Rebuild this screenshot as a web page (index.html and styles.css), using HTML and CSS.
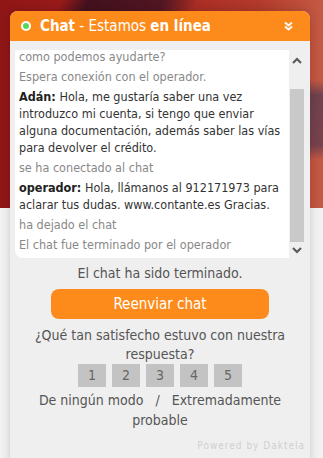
FILE: index.html
```html
<!DOCTYPE html>
<html lang="es">
<head>
<meta charset="utf-8">
<title>Chat</title>
<link rel="stylesheet" href="styles.css">
</head>
<body>
<div class="widget">
  <div class="header">
    <span class="dot"></span>
    <span class="title"><b>Chat</b> - Estamos <b>en línea</b></span>
    <svg class="collapse" width="9" height="10" viewBox="0 0 9 10"><path d="M1 1.5 L4.5 4.5 L8 1.5 M1 5.5 L4.5 8.5 L8 5.5" fill="none" stroke="#fff" stroke-width="1.8"/></svg>
  </div>
  <div class="body">
    <div class="log-row">
      <div class="log">
        <div class="log-inner">
          <div class="msg sys">como podemos ayudarte?</div>
          <div class="msg sys">Espera conexión con el operador.</div>
          <div class="msg"><b>Adán:</b> Hola, me gustaría saber una vez introduzco mi cuenta, si tengo que enviar alguna documentación, además saber las vías para devolver el crédito.</div>
          <div class="msg sys">se ha conectado al chat</div>
          <div class="msg"><b>operador:</b> Hola, llámanos al 912171973 para aclarar tus dudas. www.contante.es Gracias.</div>
          <div class="msg sys">ha dejado el chat</div>
          <div class="msg sys">El chat fue terminado por el operador</div>
        </div>
      </div>
      <div class="scroll">
        <svg class="arrow up" width="10" height="7" viewBox="0 0 10 7"><path d="M1 6 L5 2 L9 6" fill="none" stroke="#5a5a5a" stroke-width="2.2"/></svg>
        <div class="thumb"></div>
        <svg class="arrow down" width="10" height="7" viewBox="0 0 10 7"><path d="M1 1 L5 5 L9 1" fill="none" stroke="#5a5a5a" stroke-width="2.2"/></svg>
      </div>
    </div>
    <p class="ended">El chat ha sido terminado.</p>
    <button class="resend">Reenviar chat</button>
    <p class="question">¿Qué tan satisfecho estuvo con nuestra respuesta?</p>
    <div class="rating">
      <span class="rate">1</span>
      <span class="rate">2</span>
      <span class="rate">3</span>
      <span class="rate">4</span>
      <span class="rate">5</span>
    </div>
    <p class="scale">De ningún modo &nbsp; / &nbsp; Extremadamente probable</p>
    <div class="powered">Powered by Daktela</div>
  </div>
</div>
</body>
</html>
```

FILE: styles.css
```css
html, body {
  margin: 0;
  padding: 0;
}
body {
  width: 323px;
  height: 458px;
  overflow: hidden;
  font-family: "DejaVu Sans Condensed", "DejaVu Sans", sans-serif;
  background:
    linear-gradient(115deg, rgba(0,0,0,0) 0 18%, rgba(50,15,30,0.85) 26%, rgba(60,18,35,0.8) 48%, rgba(0,0,0,0) 58%) 0 0 / 323px 40px no-repeat,
    linear-gradient(180deg, rgba(0,0,0,0) 0 80px, rgba(90,60,80,0.8) 95px, rgba(100,60,80,0.8) 145px, rgba(0,0,0,0) 160px) 310px 0 / 13px 208px no-repeat,
    linear-gradient(90deg, #8f1616 0%, #a3201c 40%, #b23a2c 80%, #c45a44 100%) 0 0 / 323px 208px no-repeat,
    linear-gradient(90deg, #f2f2f2, #f9f9f9 30%, #f9f9f9 70%, #f2f2f2);
}
.widget {
  width: 300px;
  margin: 11px 0 0 10px;
  min-height: 470px;
  background: #efefef;
  border-radius: 8px 8px 0 0;
  box-shadow: 0 0 10px rgba(0,0,0,0.18);
}
.header {
  height: 30px;
  background: #fd8b1b;
  border-radius: 8px 8px 0 0;
  display: flex;
  align-items: center;
  padding: 0 17px 0 11px;
  color: #fff;
  font-family: "DejaVu Sans Condensed", "DejaVu Sans", sans-serif;
  font-size: 15px;
}
.dot {
  width: 6px;
  height: 6px;
  border-radius: 50%;
  background: #5bd45b;
  border: 2px solid #fff;
  margin-right: 9px;
}
.title {
  flex: 1;
}
.title b {
  font-weight: bold;
}
.collapse {
  display: block;
}
.body {
  padding: 9px 5px 0 5px;
  display: flex;
  flex-direction: column;
  align-items: center;
}
.log-row {
  display: flex;
  align-self: stretch;
}
.log {
  width: 274px;
  height: 208px;
  background: #fff;
  border-radius: 2px 0 0 8px;
  overflow: hidden;
}
.log-inner {
  margin-top: -2px;
  padding: 0 4px 0 4px;
  display: flex;
  flex-direction: column;
  gap: 3px;
}
.msg {
  font-size: 12.5px;
  line-height: 17px;
  color: #333;
}
.msg b {
  color: #222;
}
.msg.sys {
  color: #888;
}
.scroll {
  width: 16px;
  position: relative;
}
.arrow {
  position: absolute;
  left: 3px;
}
.arrow.up {
  top: 7px;
}
.arrow.down {
  top: 197px;
}
.thumb {
  position: absolute;
  left: 1px;
  top: 39px;
  width: 14px;
  height: 153px;
  background: #c9c9c9;
}
.ended {
  margin: 6px 0 0;
  font-size: 14px;
  line-height: 18px;
  color: #555;
}
.resend {
  margin-top: 7px;
  width: 218px;
  height: 30px;
  border: none;
  border-radius: 8px;
  background: #fd8b1b;
  color: #fff;
  font-family: "DejaVu Sans Condensed", "DejaVu Sans", sans-serif;
  font-size: 15px;
  padding: 0;
}
.question {
  margin: 7px 0 0;
  width: 262px;
  text-align: center;
  font-size: 14px;
  line-height: 19px;
  color: #555;
}
.rating {
  display: flex;
  gap: 6px;
  margin-top: 0;
}
.rate {
  width: 28px;
  height: 23px;
  background: #c3c3c3;
  color: #666;
  font-size: 14px;
  line-height: 23px;
  text-align: center;
}
.scale {
  margin: 3px 0 0;
  width: 250px;
  text-align: center;
  font-size: 14px;
  line-height: 20px;
  color: #555;
}
.powered {
  align-self: flex-end;
  margin-top: 10px;
  font-size: 10px;
  letter-spacing: 1px;
  color: #cfcfcf;
  line-height: 12px;
}
```
